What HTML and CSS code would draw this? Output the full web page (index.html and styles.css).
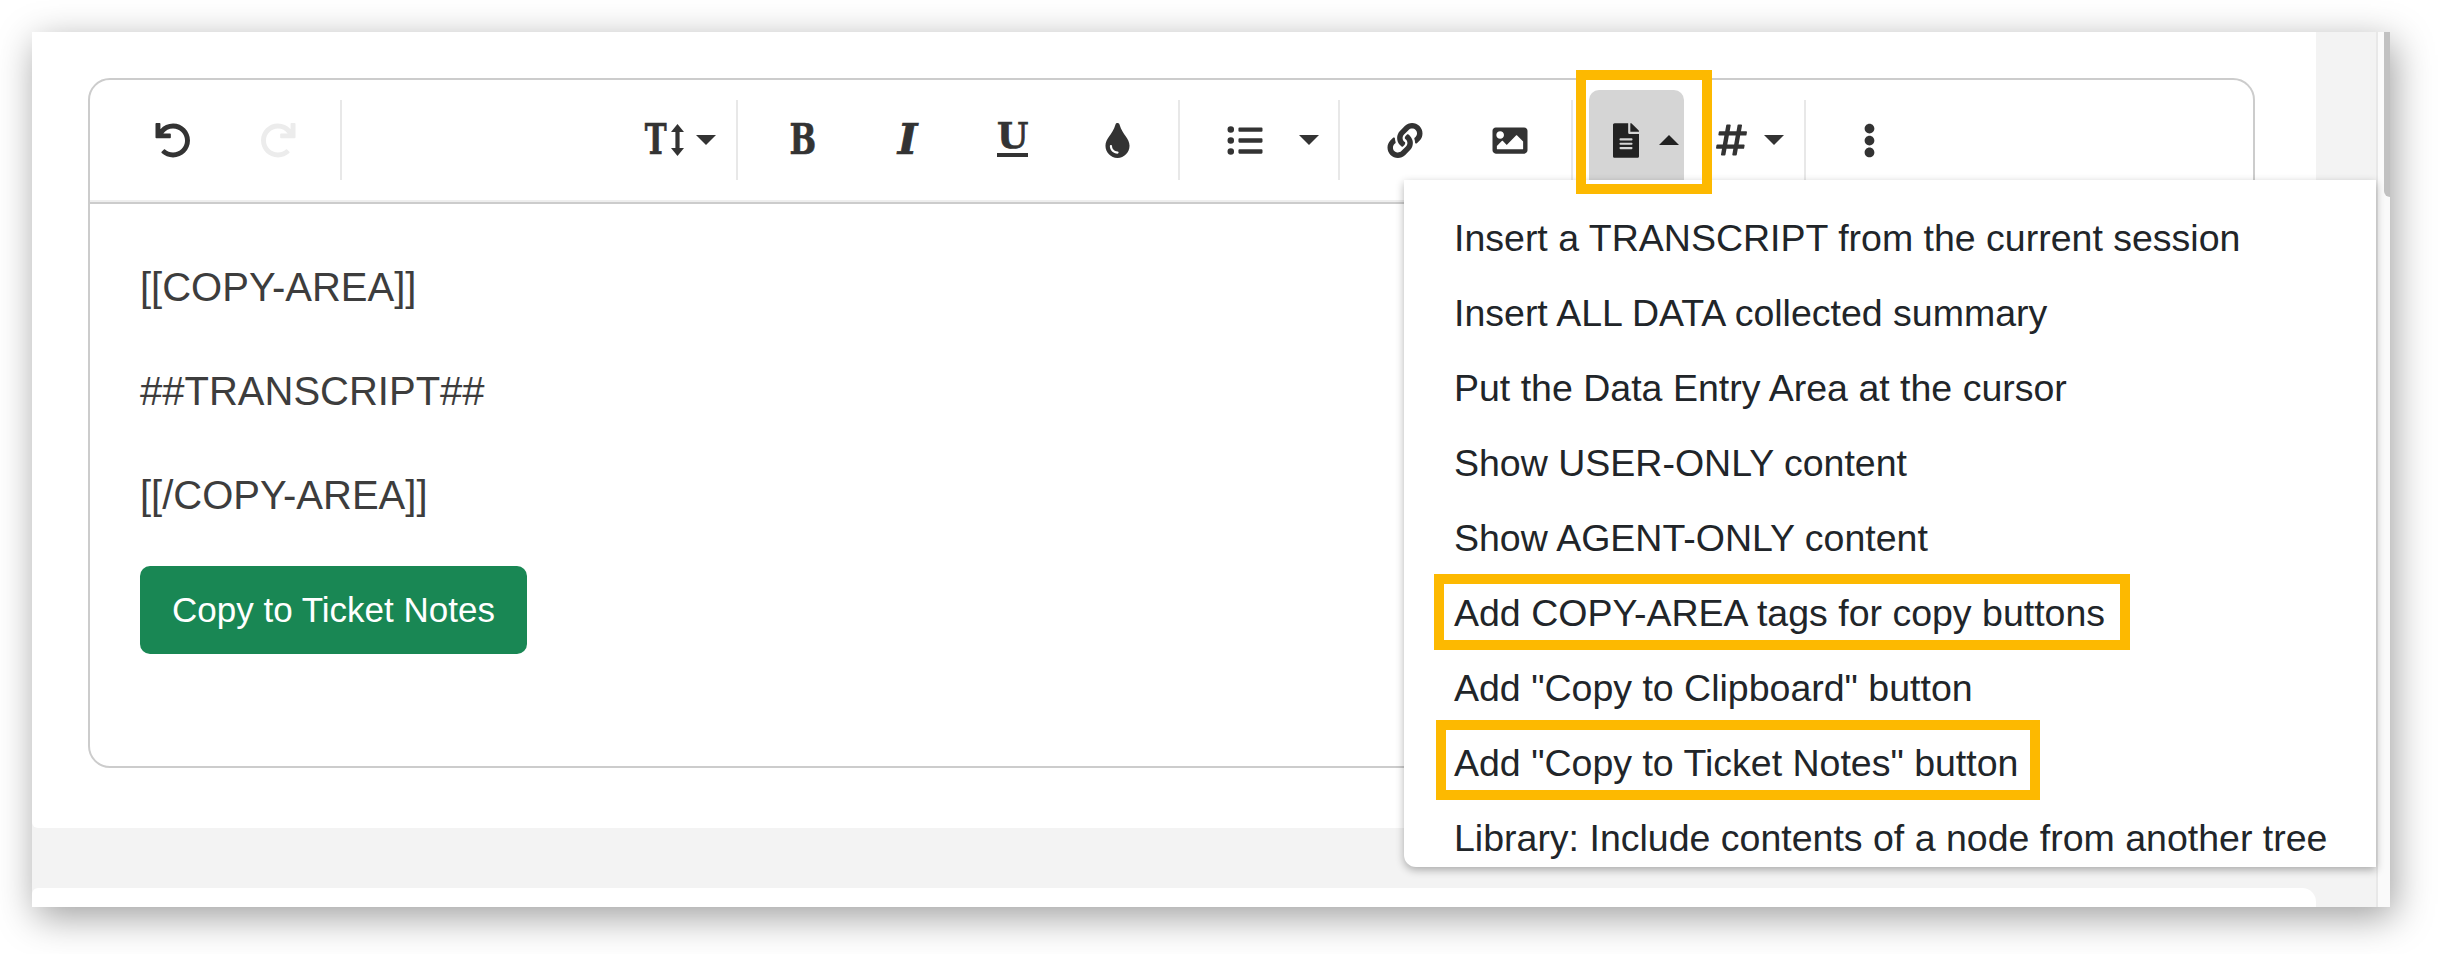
FILE: index.html
```html
<!DOCTYPE html>
<html lang="en">
<head>
<meta charset="utf-8">
<title>Editor</title>
<link rel="stylesheet" href="styles.css">
</head>
<body>
<div class="window">
  <div class="main">
    <div class="panel">
      <div class="editor">
        <div class="toolbar">
          <div class="group group-history">
            <button class="tool"><svg class="ico" viewBox="0 0 512 512"><path d="M212.333 224.333H12c-6.627 0-12-5.373-12-12V12C0 5.373 5.373 0 12 0h48c6.627 0 12 5.373 12 12v78.112C117.773 39.279 184.26 7.47 258.175 8.007c136.906.994 246.448 111.623 246.157 248.532C504.041 393.258 393.12 504 256.333 504c-64.089 0-122.496-24.313-166.51-64.215-5.099-4.622-5.334-12.554-.467-17.42l33.967-33.967c4.474-4.474 11.662-4.717 16.401-.525C170.76 415.336 211.58 432 256.333 432c97.268 0 176-78.716 176-176 0-97.267-78.716-176-176-176-58.496 0-110.28 28.476-142.274 72.333h98.274c6.627 0 12 5.373 12 12v48c0 6.627-5.373 12-12 12z"/></svg></button>
            <button class="tool tool-off"><svg class="ico flip" viewBox="0 0 512 512"><path d="M212.333 224.333H12c-6.627 0-12-5.373-12-12V12C0 5.373 5.373 0 12 0h48c6.627 0 12 5.373 12 12v78.112C117.773 39.279 184.26 7.47 258.175 8.007c136.906.994 246.448 111.623 246.157 248.532C504.041 393.258 393.12 504 256.333 504c-64.089 0-122.496-24.313-166.51-64.215-5.099-4.622-5.334-12.554-.467-17.42l33.967-33.967c4.474-4.474 11.662-4.717 16.401-.525C170.76 415.336 211.58 432 256.333 432c97.268 0 176-78.716 176-176 0-97.267-78.716-176-176-176-58.496 0-110.28 28.476-142.274 72.333h98.274c6.627 0 12 5.373 12 12v48c0 6.627-5.373 12-12 12z"/></svg></button>
          </div>
          <div class="group group-size">
            <button class="tool tool-size">
              <span class="slab slab-t">T</span>
              <svg class="arrow" viewBox="0 0 13 32"><path d="M6.500 0 13 8H8.600v16H13l-6.500 8L0 24h4.400V8H0z"/></svg>
              <i class="caret"></i>
            </button>
          </div>
          <div class="group group-format">
            <button class="tool"><span class="slab slab-b">B</span></button>
            <button class="tool"><span class="slab slab-i">I</span></button>
            <button class="tool"><span class="slab slab-u">U</span></button>
            <button class="tool"><svg class="ico ico-drop" viewBox="0 0 352 512"><path d="M205.22 22.09c-7.94-28.78-49.44-30.12-58.44 0C100.01 179.85 0 222.72 0 333.91 0 432.35 78.72 512 176 512s176-79.65 176-178.09c0-111.75-99.79-153.34-146.78-311.82zM176 448c-61.75 0-112-50.25-112-112 0-8.84 7.16-16 16-16s16 7.16 16 16c0 44.11 35.89 80 80 80 8.84 0 16 7.16 16 16s-7.160 16-16 16z"/></svg></button>
          </div>
          <div class="group group-list">
            <button class="tool"><svg class="ico" viewBox="0 0 512 512"><path d="M48 48a48 48 0 1 0 48 48 48 48 0 0 0-48-48zm0 160a48 48 0 1 0 48 48 48 48 0 0 0-48-48zm0 160a48 48 0 1 0 48 48 48 48 0 0 0-48-48zm448 16H176a16 16 0 0 0-16 16v32a16 16 0 0 0 16 16h320a16 16 0 0 0 16-16v-32a16 16 0 0 0-16-16zm0-320H176a16 16 0 0 0-16 16v32a16 16 0 0 0 16 16h320a16 16 0 0 0 16-16V80a16 16 0 0 0-16-16zm0 160H176a16 16 0 0 0-16 16v32a16 16 0 0 0 16 16h320a16 16 0 0 0 16-16v-32a16 16 0 0 0-16-16z"/></svg></button>
            <button class="tool-caret"><i class="caret"></i></button>
          </div>
          <div class="group group-insert">
            <button class="tool"><svg class="ico" viewBox="0 0 512 512"><path d="M326.612 185.391c59.747 59.809 58.927 155.698.36 214.59-.11.12-.24.25-.36.37l-67.2 67.2c-59.27 59.27-155.699 59.262-214.96 0-59.27-59.26-59.27-155.7 0-214.96l37.106-37.106c9.84-9.84 26.786-3.3 27.294 10.606.648 17.722 3.826 35.527 9.69 52.721 1.986 5.822.567 12.262-3.783 16.612l-13.087 13.087c-28.026 28.026-28.905 73.66-1.155 101.96 28.024 28.579 74.086 28.749 102.325.51l67.2-67.19c28.191-28.191 28.073-73.757 0-101.83-3.701-3.694-7.429-6.564-10.341-8.569a16.037 16.037 0 0 1-6.947-12.606c-.396-10.567 3.348-21.456 11.698-29.806l21.054-21.055c5.521-5.521 14.182-6.199 20.584-1.731a152.482 152.482 0 0 1 20.522 17.197zM467.547 44.449c-59.261-59.262-155.69-59.27-214.96 0l-67.2 67.2c-.12.12-.25.25-.36.37-58.566 58.892-59.387 154.781.36 214.59a152.454 152.454 0 0 0 20.521 17.196c6.402 4.468 15.064 3.789 20.584-1.731l21.054-21.055c8.35-8.35 12.094-19.239 11.698-29.806a16.037 16.037 0 0 0-6.947-12.606c-2.912-2.005-6.64-4.875-10.341-8.569-28.073-28.073-28.191-73.639 0-101.83l67.2-67.19c28.239-28.239 74.3-28.069 102.325.51 27.75 28.3 26.872 73.934-1.155 101.96l-13.087 13.087c-4.35 4.35-5.769 10.79-3.783 16.612 5.864 17.194 9.042 34.999 9.69 52.721.509 13.906 17.454 20.446 27.294 10.606l37.106-37.106c59.271-59.259 59.271-155.699.001-214.959z"/></svg></button>
            <button class="tool"><svg class="ico" viewBox="0 0 512 512"><path d="M464 448H48c-26.51 0-48-21.49-48-48V112c0-26.51 21.49-48 48-48h416c26.51 0 48 21.49 48 48v288c0 26.51-21.49 48-48 48zM112 120c-30.928 0-56 25.072-56 56s25.072 56 56 56 56-25.072 56-56-25.072-56-56-56zM64 384h384V272l-87.515-87.515c-4.686-4.686-12.284-4.686-16.971 0L208 320l-55.515-55.515c-4.686-4.686-12.284-4.686-16.971 0L64 336v48z"/></svg></button>
          </div>
          <button class="doc-btn"><svg class="ico ico-doc" viewBox="0 0 384 512"><path d="M224 136V0H24C10.7 0 0 10.7 0 24v464c0 13.3 10.7 24 24 24h336c13.3 0 24-10.7 24-24V160H248c-13.2 0-24-10.8-24-24zm64 236c0 6.6-5.4 12-12 12H108c-6.600 0-12-5.400-12-12v-8c0-6.600 5.400-12 12-12h168c6.600 0 12 5.400 12 12v8zm0-64c0 6.600-5.400 12-12 12H108c-6.600 0-12-5.400-12-12v-8c0-6.600 5.400-12 12-12h168c6.600 0 12 5.400 12 12v8zm0-72v8c0 6.600-5.400 12-12 12H108c-6.600 0-12-5.400-12-12v-8c0-6.600 5.400-12 12-12h168c6.600 0 12 5.400 12 12zm96-114.100v6.100H256V0h6.100c6.400 0 12.500 2.500 17 7l97.900 98c4.500 4.500 7 10.600 7 16.900z"/></svg><i class="caret caret-up"></i></button>
          <div class="group group-hash">
            <svg class="ico ico-hash" viewBox="0 0 448 512"><path d="M440.667 182.109l7.143-40c1.313-7.355-4.342-14.109-11.813-14.109h-74.81l14.623-81.891C377.123 38.754 371.468 32 363.997 32h-40.632a12 12 0 0 0-11.813 9.891L296.175 128H197.54l14.623-81.891C213.477 38.754 207.822 32 200.35 32h-40.632a12 12 0 0 0-11.813 9.891L132.528 128H53.432a12 12 0 0 0-11.813 9.891l-7.143 40C33.163 185.246 38.818 192 46.289 192h74.81L98.242 320H19.146a12 12 0 0 0-11.813 9.891l-7.143 40C-1.123 377.246 4.532 384 12.003 384h74.81L72.19 465.891C70.877 473.246 76.532 480 84.003 480h40.632a12 12 0 0 0 11.813-9.891L151.826 384h98.634l-14.623 81.891C234.523 473.246 240.178 480 247.65 480h40.632a12 12 0 0 0 11.813-9.891L315.472 384h79.096a12 12 0 0 0 11.813-9.891l7.143-40c1.313-7.355-4.342-14.109-11.813-14.109h-74.81l22.857-128h79.096a12 12 0 0 0 11.813-9.891zM261.889 320h-98.634l22.857-128h98.634l-22.857 128z"/></svg>
            <i class="caret"></i>
          </div>
          <button class="tool tool-more"><svg class="ico ico-more" viewBox="0 0 192 512"><path d="M96 184c39.8 0 72 32.200 72 72s-32.200 72-72 72-72-32.200-72-72 32.200-72 72-72zM24 80c0 39.800 32.200 72 72 72s72-32.200 72-72S135.800 8 96 8 24 40.200 24 80zm0 352c0 39.800 32.200 72 72 72s72-32.200 72-72-32.200-72-72-72-72 32.200-72 72z"/></svg></button>
        </div>
        <div class="content">
          <p>[[COPY-AREA]]</p>
          <p>##TRANSCRIPT##</p>
          <p>[[/COPY-AREA]]</p>
          <a class="copy-btn">Copy to Ticket Notes</a>
        </div>
      </div>
    </div>
    <div class="lower-card"></div>
  </div>
  <div class="scrollbar"><div class="thumb"></div></div>

  <div class="menu">
    <div class="menu-item">Insert a TRANSCRIPT from the current session</div>
    <div class="menu-item">Insert ALL DATA collected summary</div>
    <div class="menu-item">Put the Data Entry Area at the cursor</div>
    <div class="menu-item">Show USER-ONLY content</div>
    <div class="menu-item">Show AGENT-ONLY content</div>
    <div class="menu-item">Add COPY-AREA tags for copy buttons</div>
    <div class="menu-item">Add "Copy to Clipboard" button</div>
    <div class="menu-item">Add "Copy to Ticket Notes" button</div>
    <div class="menu-item">Library: Include contents of a node from another tree</div>
  </div>

  <div class="mark mark-doc"></div>
  <div class="mark mark-area"></div>
  <div class="mark mark-notes"></div>
</div>
</body>
</html>
```
FILE: styles.css
```css
* { box-sizing: border-box; }
html, body { margin: 0; height: 100%; background: #fff; overflow: hidden; }
body { padding: 32px; font-family: "Liberation Sans", Arial, sans-serif; color: #333; }

.window {
  position: relative;
  display: flex;
  width: 2358px;
  height: 875px;
  box-shadow: 4px 10px 36px rgba(0, 0, 0, .38);
  background: #f3f3f3;
}
.main { width: 2344px; display: flex; flex-direction: column; }
.panel {
  width: 2284px;
  height: 796px;
  padding: 46px 0 0 56px;
  background: #fff;
  border-radius: 0 0 8px 6px;
}
.lower-card {
  width: 2284px;
  height: 19px;
  margin-top: 60px;
  background: #fff;
  border-radius: 6px 14px 0 0;
}
.scrollbar {
  width: 14px;
  background: #fafafa;
  border-left: 2px solid #e8e8e8;
}
.thumb {
  width: 6px;
  height: 165px;
  margin-left: auto;
  background: #c1c1c1;
  border-radius: 0 0 0 8px;
}

.editor {
  width: 2167px;
  height: 690px;
  border: 2px solid #ccc;
  border-radius: 22px;
}
.toolbar {
  display: flex;
  align-items: flex-start;
  height: 124px;
  padding: 20px 0 0 30px;
  border-bottom: 2px solid #ccc;
  box-shadow: inset 0 -2px 0 #eee;
}
.group {
  display: flex;
  align-items: center;
  height: 80px;
  border-right: 2px solid #e8e8e8;
}
.group-history { padding-right: 10px; }
.group-size { margin-left: 286px; padding-right: 3px; }
.group-format { padding: 0 8px 0 12px; }
.group-list { padding: 0 17px 0 12px; }
.group-insert { padding: 0 9px 0 12px; }
.group-hash { padding: 0 20px 0 32px; gap: 17px; }

.tool, .tool-caret, .doc-btn {
  display: flex;
  align-items: center;
  justify-content: center;
  border: 0;
  padding: 0;
  background: none;
  color: #333;
  font: inherit;
}
.tool { width: 105px; height: 80px; }
.tool-off { color: #ececec; }
.tool-caret { width: 24px; height: 80px; }
.tool-size { gap: 5px; }
.tool-more { margin-left: 11px; }

.doc-btn {
  justify-content: flex-start;
  gap: 20px;
  width: 95px;
  height: 90px;
  margin: -10px 0 0 16px;
  padding: 10px 0 0 24px;
  background: #d5d5d5;
  border-radius: 10px 10px 0 0;
  color: #222;
}

.ico { display: block; width: 36px; height: 35px; fill: currentColor; }
.flip { transform: scaleX(-1); }
.ico-drop { width: 25px; }
.ico-doc { width: 26px; }
.ico-hash { width: 31px; height: 36px; fill: #333; }
.ico-more { width: 13px; }

.slab {
  display: block;
  font-family: "DejaVu Serif", serif;
  font-weight: 700;
  font-size: 42px;
  line-height: 1;
  color: #333;
  -webkit-text-stroke: .7px #333;
}
.slab-t { margin: 0 -5px; transform: scaleX(.7); }
.slab-b { transform: scaleX(.75); }
.slab-i { font-style: italic; }
.slab-u {
  width: 31px;
  height: 37px;
  margin-bottom: 3px;
  padding-bottom: 3px;
  font-size: 36px;
  line-height: 30px;
  text-align: center;
  border-bottom: 4px solid #333;
}
.arrow { width: 13px; height: 32px; fill: #333; }

.caret {
  display: block;
  width: 0;
  height: 0;
  margin-left: 7px;
  border-left: 10px solid transparent;
  border-right: 10px solid transparent;
  border-top: 10px solid #333;
}
.tool-caret .caret, .group-hash .caret { margin-left: 0; }
.caret-up {
  margin-left: 0;
  border-top: 0;
  border-bottom: 10px solid #222;
}

.content { padding: 53px 0 0 50px; }
.content p {
  margin: 0 0 44px;
  font-size: 40px;
  line-height: 60px;
  color: #3d3d3d;
}
.copy-btn {
  display: inline-block;
  margin-top: -3px;
  width: 387px;
  height: 88px;
  padding-left: 32px;
  font-size: 35px;
  line-height: 87px;
  color: #fff;
  background: #198754;
  border-radius: 10px;
  white-space: nowrap;
}

.menu {
  position: absolute;
  left: 1372px;
  top: 148px;
  width: 972px;
  height: 687px;
  padding-top: 21px;
  overflow: hidden;
  background: #fff;
  border-radius: 0 0 0 12px;
  box-shadow: 0 3px 8px rgba(0, 0, 0, .3);
}
.menu-item {
  height: 75px;
  padding-left: 50px;
  font-size: 37.5px;
  line-height: 75px;
  color: #212529;
  white-space: nowrap;
}

.mark { position: absolute; border: 10px solid #fdb900; }
.mark-doc { left: 1544px; top: 38px; width: 136px; height: 124px; }
.mark-area { left: 1402px; top: 542px; width: 696px; height: 76px; }
.mark-notes { left: 1404px; top: 688px; width: 604px; height: 80px; }
```
